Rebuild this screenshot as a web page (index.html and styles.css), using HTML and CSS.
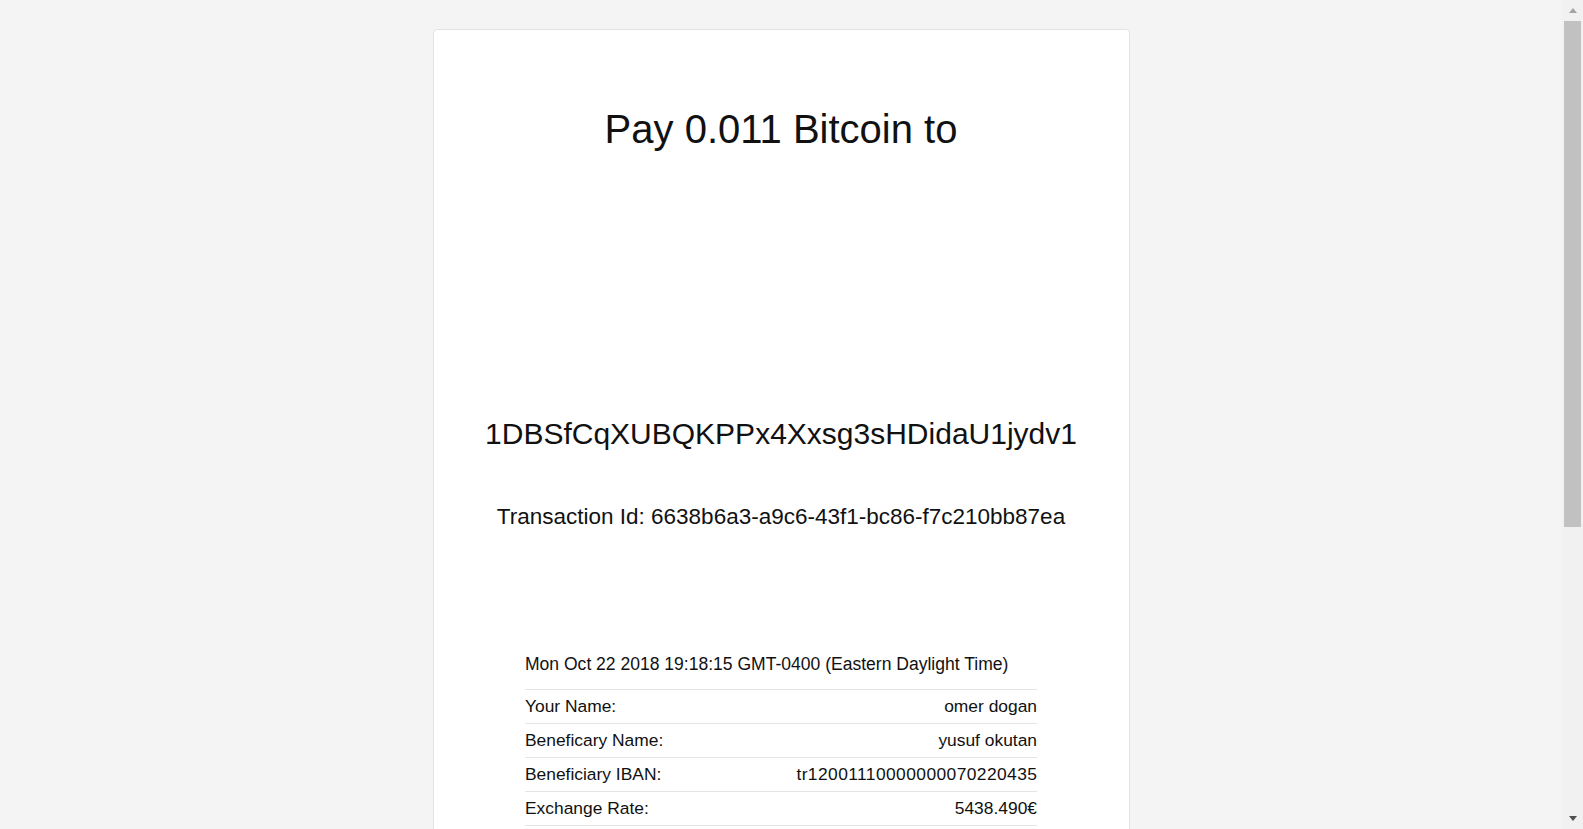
FILE: index.html
```html
<!DOCTYPE html>
<html lang="en">
<head>
<meta charset="utf-8">
<title>Pay Bitcoin</title>
<link rel="stylesheet" href="styles.css">
</head>
<body>
  <main class="page">
    <section class="card">
      <h1 class="title">Pay 0.011 Bitcoin to</h1>
      <div class="qr"></div>
      <h2 class="address">1DBSfCqXUBQKPPx4Xxsg3sHDidaU1jydv1</h2>
      <h3 class="txid">Transaction Id: 6638b6a3-a9c6-43f1-bc86-f7c210bb87ea</h3>
      <div class="details">
        <div class="date">Mon Oct 22 2018 19:18:15 GMT-0400 (Eastern Daylight Time)</div>
        <div class="row"><span>Your Name:</span><span>omer dogan</span></div>
        <div class="row"><span>Beneficary Name:</span><span>yusuf okutan</span></div>
        <div class="row"><span>Beneficiary IBAN:</span><span class="iban">tr12001110000000070220435</span></div>
        <div class="row"><span>Exchange Rate:</span><span>5438.490€</span></div>
      </div>
    </section>
  </main>
  <div class="scrollbar" aria-hidden="true">
    <div class="sb-btn"><span class="arrow-up"></span></div>
    <div class="sb-thumb"></div>
    <div class="sb-track"></div>
    <div class="sb-btn"><span class="arrow-down"></span></div>
  </div>
</body>
</html>
```

FILE: styles.css
```css
html, body {
  margin: 0;
  padding: 0;
}

body {
  background: #f4f4f4;
  font-family: "Liberation Sans", Arial, sans-serif;
  color: #111111;
}

.page {
  padding: 29px 21px 29px 0;
}

.card {
  width: 695px;
  margin: 0 auto;
  background: #ffffff;
  border: 1px solid #e3e3e3;
  border-radius: 4px;
  padding: 75px 0 440px;
  text-align: center;
}

.title {
  margin: 0;
  font-size: 40px;
  line-height: 48px;
  font-weight: 400;
}

.qr {
  height: 263px;
}

.address {
  margin: 0;
  font-size: 30px;
  line-height: 36px;
  font-weight: 400;
}

.txid {
  margin: 51px 0 0;
  font-size: 22.5px;
  line-height: 27px;
  font-weight: 400;
}

.details {
  width: 512px;
  margin: 124px auto 0;
  text-align: left;
  font-size: 17.4px;
  line-height: 20px;
}

.date {
  font-size: 17.55px;
  padding-bottom: 15px;
}

.row {
  display: flex;
  justify-content: space-between;
  border-top: 1px solid #e4e4e4;
  padding: 6px 0 7px;
}

.row:last-child {
  border-bottom: 1px solid #e4e4e4;
}

.iban {
  letter-spacing: 0.42px;
  margin-right: -0.42px;
}

/* decorative window scrollbar, drawn over the right edge */
.scrollbar {
  position: fixed;
  top: 0;
  right: 0;
  bottom: 0;
  width: 21px;
  background: #f1f1f1;
  display: flex;
  flex-direction: column;
  align-items: center;
}

.sb-btn {
  height: 21px;
  width: 100%;
  display: flex;
  align-items: center;
  justify-content: center;
}

.sb-thumb {
  width: 17px;
  height: 506px;
  background: #c1c1c1;
}

.sb-track {
  flex: 1;
}

.arrow-up {
  width: 0;
  height: 0;
  border-left: 4.5px solid transparent;
  border-right: 4.5px solid transparent;
  border-bottom: 5px solid #a3a3a3;
}

.arrow-down {
  width: 0;
  height: 0;
  border-left: 4.5px solid transparent;
  border-right: 4.5px solid transparent;
  border-top: 5px solid #505050;
}
```
